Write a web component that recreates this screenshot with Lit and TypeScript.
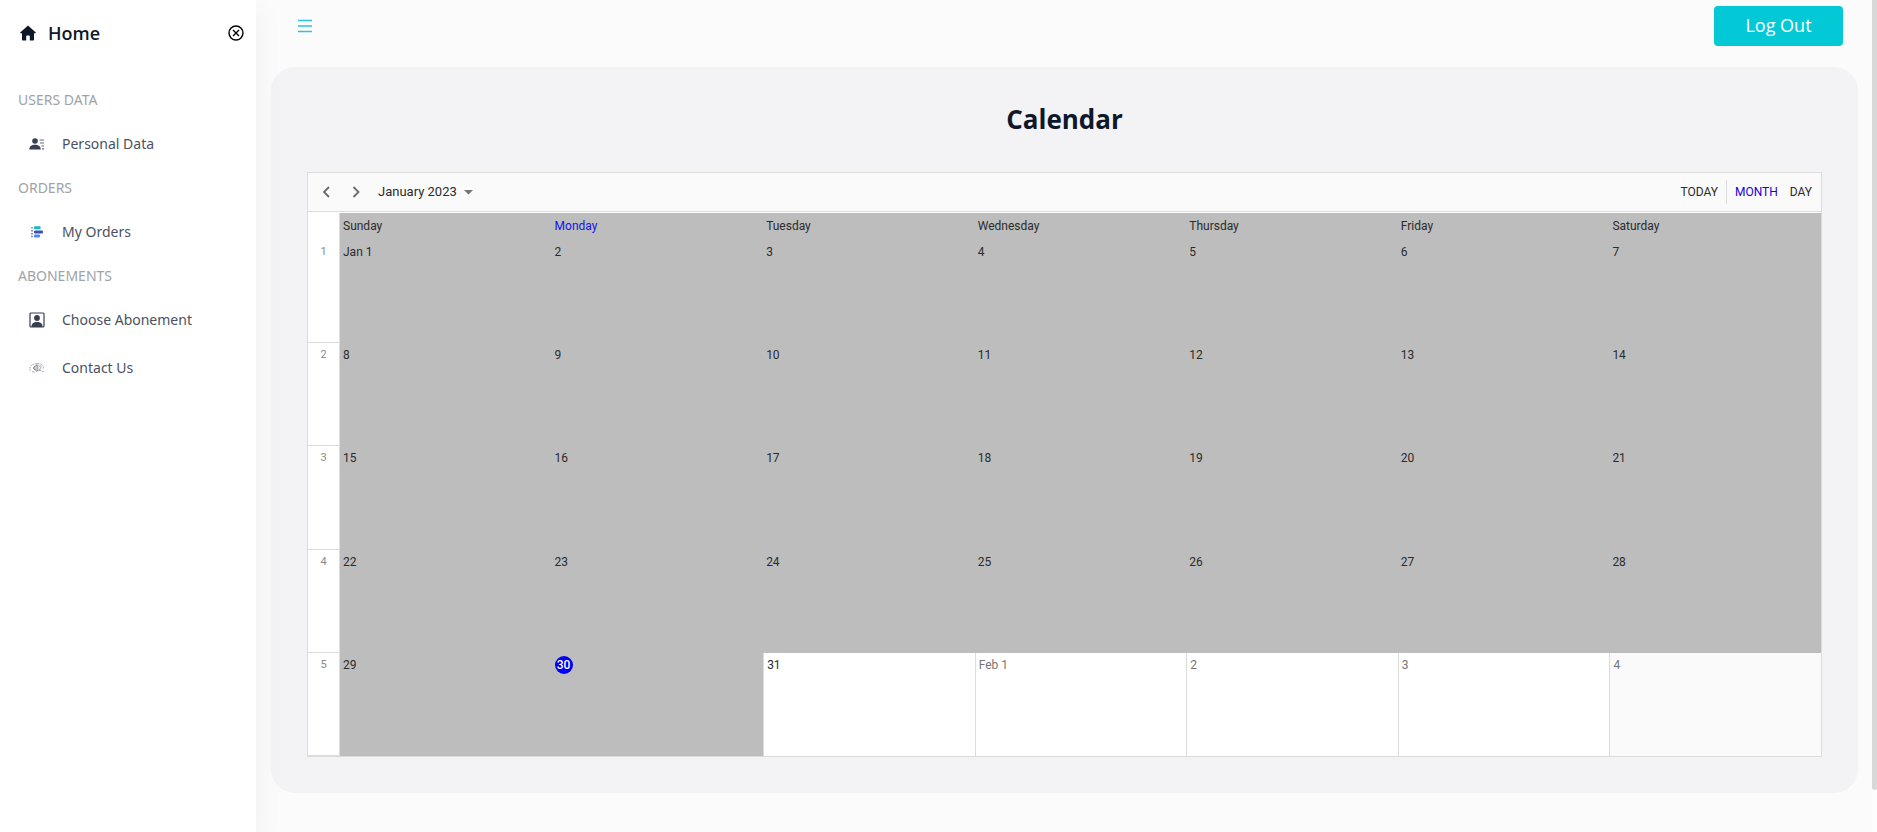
import { LitElement, html, css, svg } from "lit";
import { customElement } from "lit/decorators.js";
import { classMap } from "lit/directives/class-map.js";

interface MenuItem {
  label: string;
  icon: unknown;
}

interface MenuSection {
  title: string;
  items: MenuItem[];
}

const personIcon = svg`<svg class="icon" viewBox="0 0 16 12" width="16" height="12" fill="#373f51">
  <circle cx="6" cy="3" r="2.8"/>
  <path d="M0.3 11.4c0-3 2.2-4.6 5.7-4.6s5.7 1.6 5.7 4.6z"/>
  <path d="M10.6 1.4H15v1.2H10.6zM11 4.4h4v1.2h-4zM12.4 7.4H15v1.200h-2.6zM13 10.2h2v1.200h-2z" opacity=".75"/>
</svg>`;

const ordersIcon = svg`<svg class="icon" viewBox="0 0 14 14" width="14" height="14">
  <path d="M1 2.2h2v1.4H1zM1 5h2v1.4H1zM1 8h2v1.4H1zM1 10.8h2v1.4H1z" fill="#8b93a5"/>
  <rect x="4" y="1.2" width="6.6" height="3" rx="1" fill="#17b8cf"/>
  <rect x="4" y="5.4" width="9" height="3" rx="1" fill="#3f4fb5"/>
  <rect x="4" y="9.6" width="6" height="3" rx="1" fill="#4a86f7"/>
</svg>`;

const portraitIcon = svg`<svg class="icon" viewBox="0 0 16 16" width="16" height="16">
  <rect x="1" y="1" width="14" height="14" rx="1" fill="none" stroke="#373f51" stroke-width="1.2"/>
  <circle cx="8" cy="6" r="2.9" fill="#373f51"/>
  <path d="M2.4 15c0-3.4 2-5 5.6-5s5.6 1.600 5.600 5z" fill="#373f51"/>
</svg>`;

const contactIcon = svg`<svg class="icon" viewBox="0 0 16 10" width="16" height="10" fill="none" stroke="#7d8391" stroke-width=".7">
  <path d="M1.400 7.800C-.2 5.500 1.200 2 5.200 1" stroke-dasharray="1.600 .8"/>
  <path d="M3 8.600l2.600.6M5.600 1l4.800-.4"/>
  <path d="M4 5l4-3.200v6.600zM6 3.400v3.600" stroke="#5d6371"/>
  <path d="M9 1.800v6.800M10 3.200c1.800-1 3 .4 1.600 1.900L10 7.400h2.400"/>
  <path d="M11.400 1c2.800.6 3.400 2.600 2.800 4.600M13 8.600h2.400" stroke-dasharray="1.600 .8"/>
</svg>`;

const MENU: MenuSection[] = [
  { title: "USERS DATA", items: [{ label: "Personal Data", icon: personIcon }] },
  { title: "ORDERS", items: [{ label: "My Orders", icon: ordersIcon }] },
  {
    title: "ABONEMENTS",
    items: [
      { label: "Choose Abonement", icon: portraitIcon },
      { label: "Contact Us", icon: contactIcon },
    ],
  },
];

@customElement("side-menu")
export class SideMenu extends LitElement {
  static styles = css`
    :host {
      display: block;
      box-sizing: border-box;
      width: 256px;
      flex: none;
      background: #fff;
      position: relative;
      z-index: 1;
      box-shadow: 0 8px 30px rgba(0, 0, 0, 0.05);
    }
    .top {
      display: flex;
      align-items: center;
      justify-content: space-between;
      height: 66px;
      padding: 0 12px 0 20px;
      margin-bottom: 14px;
    }
    .home {
      display: flex;
      align-items: center;
      gap: 12px;
      color: #0f172a;
      font-size: 18px;
      line-height: 28px;
      font-weight: 600;
      text-decoration: none;
    }
    .home svg,
    .close svg,
    .icon {
      display: block;
    }
    .close {
      border: 0;
      padding: 0;
      background: none;
      cursor: pointer;
    }
    .section {
      margin: 0;
      padding-left: 18px;
      font-family: "Noto Sans", "Open Sans", sans-serif;
      font-size: 14px;
      line-height: 40px;
      font-weight: 400;
      color: #a0a3a9;
    }
    .list {
      margin: 0;
      padding: 0;
      list-style: none;
    }
    .link {
      display: flex;
      align-items: center;
      height: 48px;
      padding-left: 29px;
      gap: 17px;
      color: #4b5162;
      font-family: "Noto Sans", "Open Sans", sans-serif;
      font-size: 14px;
      line-height: 20px;
      text-decoration: none;
    }
    .slot {
      display: flex;
      justify-content: center;
      width: 16px;
    }
  `;

  render() {
    return html`
      <div class="top">
        <a class="home" href="#home">
          <svg viewBox="0 0 16 16" width="16" height="16" fill="#0f172a">
            <path d="M8 .4L.2 7.400c-.3.400-.1.800.4.800H2v6.400c0 .6.400 1 1 1h3.200v-4.400c0-.5.300-.8.800-.8h2c.5 0 .8.300.8.800v4.400H13c.6 0 1-.400 1-1V8.200h1.400c.5 0 .7-.400.400-.8z"/>
          </svg>
          <span>Home</span>
        </a>
        <button class="close" type="button" aria-label="Close menu">
          <svg viewBox="0 0 16 16" width="16" height="16" fill="none" stroke="#000" stroke-width="1.400">
            <circle cx="8" cy="8" r="7"/>
            <path d="M5 5l6 6M11 5l-6 6"/>
          </svg>
        </button>
      </div>
      <nav>
        ${MENU.map(
          (section) => html`
            <h2 class="section">${section.title}</h2>
            <ul class="list">
              ${section.items.map(
                (item) => html`<li>
                  <a class="link" href="#"><span class="slot">${item.icon}</span><span>${item.label}</span></a>
                </li>`
              )}
            </ul>
          `
        )}
      </nav>
    `;
  }
}

const WEEKDAYS = ["Sunday", "Monday", "Tuesday", "Wednesday", "Thursday", "Friday", "Saturday"];
const TODAY = 30;
const DAYS_IN_MONTH = 31;

interface Day {
  label: string;
  past: boolean;
  today: boolean;
  other: boolean;
  weekend: boolean;
}

/** Five weeks starting on Sunday, January 1. */
function buildWeeks(): Day[][] {
  return [0, 1, 2, 3, 4].map((week) =>
    WEEKDAYS.map((_, column) => {
      const index = week * 7 + column + 1;
      const other = index > DAYS_IN_MONTH;
      const date = other ? index - DAYS_IN_MONTH : index;
      const prefix = date === 1 ? (other ? "Feb " : "Jan ") : "";
      return {
        label: `${prefix}${date}`,
        past: index <= TODAY,
        today: index === TODAY,
        other,
        weekend: column === 0 || column === 6,
      };
    })
  );
}

@customElement("month-calendar")
export class MonthCalendar extends LitElement {
  static styles = css`
    :host {
      display: block;
      border: 1px solid #dcdcdc;
      background: #fff;
      font-family: Roboto, sans-serif;
      font-size: 12px;
      color: #2b2b2b;
    }
    .bar {
      display: flex;
      align-items: center;
      justify-content: space-between;
      height: 38px;
      padding: 0 9px 0 8px;
      background: #fafafa;
      border-bottom: 1px solid #dcdcdc;
      margin-bottom: 1px;
    }
    .group {
      display: flex;
      align-items: center;
    }
    button {
      display: flex;
      align-items: center;
      border: 0;
      margin: 0;
      padding: 0;
      background: none;
      font: inherit;
      line-height: 20px;
      color: inherit;
      cursor: pointer;
    }
    .nav {
      justify-content: center;
      width: 20px;
      height: 24px;
      margin-right: 10px;
    }
    .range {
      font-size: 13px;
      gap: 7px;
      padding-left: 2px;
    }
    .views {
      gap: 12px;
    }
    .today {
      padding-right: 8px;
      margin-right: -4px;
      border-right: 1px solid #dcdcdc;
      height: 24px;
    }
    .active {
      color: #1a00d8;
    }
    .grid {
      width: 100%;
      height: 543px;
      table-layout: fixed;
      border-collapse: separate;
      border-spacing: 0;
    }
    .weeks {
      width: 32px;
    }
    th,
    td {
      box-sizing: border-box;
      padding: 3px;
      text-align: left;
      vertical-align: top;
      font-weight: 400;
      line-height: 18px;
    }
    .head {
      height: 27px;
      padding-top: 4px;
      background: #bdbdbd;
    }
    .current {
      color: #1414e6;
    }
    .week {
      padding: 3px 0;
      text-align: center;
      color: #8a8a8a;
      font-size: 11px;
      border-right: 1px solid #dcdcdc;
      border-bottom: 1px solid #dcdcdc;
    }
    .corner {
      border-right: 1px solid #dcdcdc;
    }
    .day {
      border-left: 1px solid #dcdcdc;
    }
    .past {
      background: #bdbdbd;
      border-left: 0;
    }
    .other {
      color: #757575;
    }
    .off {
      background: #fafafa;
    }
    .badge {
      display: block;
      width: 18px;
      border-radius: 9px;
      background: #0000f5;
      color: #fff;
      text-align: center;
      font-weight: 500;
    }
  `;

  private weeks = buildWeeks();

  render() {
    return html`
      <div class="bar">
        <div class="group">
          <button class="nav" type="button" aria-label="Previous month">
            <svg viewBox="0 0 8 12" width="8" height="12" fill="none" stroke="#6b6b6b" stroke-width="1.800"><path d="M7 1L2 6l5 5"/></svg>
          </button>
          <button class="nav" type="button" aria-label="Next month">
            <svg viewBox="0 0 8 12" width="8" height="12" fill="none" stroke="#6b6b6b" stroke-width="1.800"><path d="M1.500 1l5 5-5 5"/></svg>
          </button>
          <button class="range" type="button">
            <span>January 2023</span>
            <svg viewBox="0 0 9 5" width="9" height="5" fill="#757575"><path d="M0 0h9L4.500 4.500z"/></svg>
          </button>
        </div>
        <div class="group views">
          <button class="today" type="button">TODAY</button>
          <button class="active" type="button">MONTH</button>
          <button type="button">DAY</button>
        </div>
      </div>
      <table class="grid">
        <colgroup>
          <col class="weeks" />
          <col span="7" />
        </colgroup>
        <thead>
          <tr>
            <td class="corner"></td>
            ${WEEKDAYS.map(
              (name, i) => html`<th scope="col" class=${classMap({ head: true, current: i === 1 })}>${name}</th>`
            )}
          </tr>
        </thead>
        <tbody>
          ${this.weeks.map(
            (week, i) => html`<tr>
              <th scope="row" class="week">${i + 1}</th>
              ${week.map(
                (day) => html`<td
                  class=${classMap({
                    day: true,
                    past: day.past,
                    other: day.other,
                    off: day.weekend && !day.past,
                  })}
                >${day.today ? html`<span class="badge">${day.label}</span>` : day.label}</td>`
              )}
            </tr>`
          )}
        </tbody>
      </table>
    `;
  }
}

@customElement("app-root")
export class AppRoot extends LitElement {
  static styles = css`
    :host {
      display: flex;
      min-height: 100vh;
      background: #fbfbfb;
      font-family: "Open Sans", sans-serif;
    }
    .main {
      flex: 1;
      min-width: 0;
    }
    .bar {
      display: flex;
      align-items: center;
      justify-content: space-between;
      padding: 6px 29px 6px 42px;
      margin-bottom: 15px;
    }
    .menu {
      border: 0;
      padding: 0;
      background: none;
      cursor: pointer;
    }
    .menu svg {
      display: block;
    }
    .logout {
      width: 129px;
      height: 40px;
      padding: 0 0 2px;
      border: 0;
      border-radius: 4px;
      background: #03c9d7;
      color: #fff;
      font-family: inherit;
      font-size: 18px;
      line-height: 28px;
      cursor: pointer;
    }
    .card {
      margin: 0 14px 39px 15px;
      padding: 34px 36px 36px;
      border-radius: 24px;
      background: #f3f3f5;
    }
    .title {
      margin: 0 0 35px;
      text-align: center;
      font-size: 26px;
      line-height: 36px;
      font-weight: 700;
      color: #0f172a;
    }
    .track {
      flex: none;
      width: 5px;
      background: #fdfdfd;
    }
    .thumb {
      height: 95%;
      border-radius: 0 0 3px 3px;
      background: #d8d8d8;
    }
  `;

  render() {
    return html`
      <side-menu></side-menu>
      <main class="main">
        <div class="bar">
          <button class="menu" type="button" aria-label="Menu">
            <svg viewBox="0 0 14 14" width="14" height="14" fill="none" stroke="#2fc3d3" stroke-width="1.400">
              <path d="M0 1.500h14M0 7h14M0 12.500h14"/>
            </svg>
          </button>
          <button class="logout" type="button">Log Out</button>
        </div>
        <section class="card">
          <h1 class="title">Calendar</h1>
          <month-calendar></month-calendar>
        </section>
      </main>
      <div class="track"><div class="thumb"></div></div>
    `;
  }
}
